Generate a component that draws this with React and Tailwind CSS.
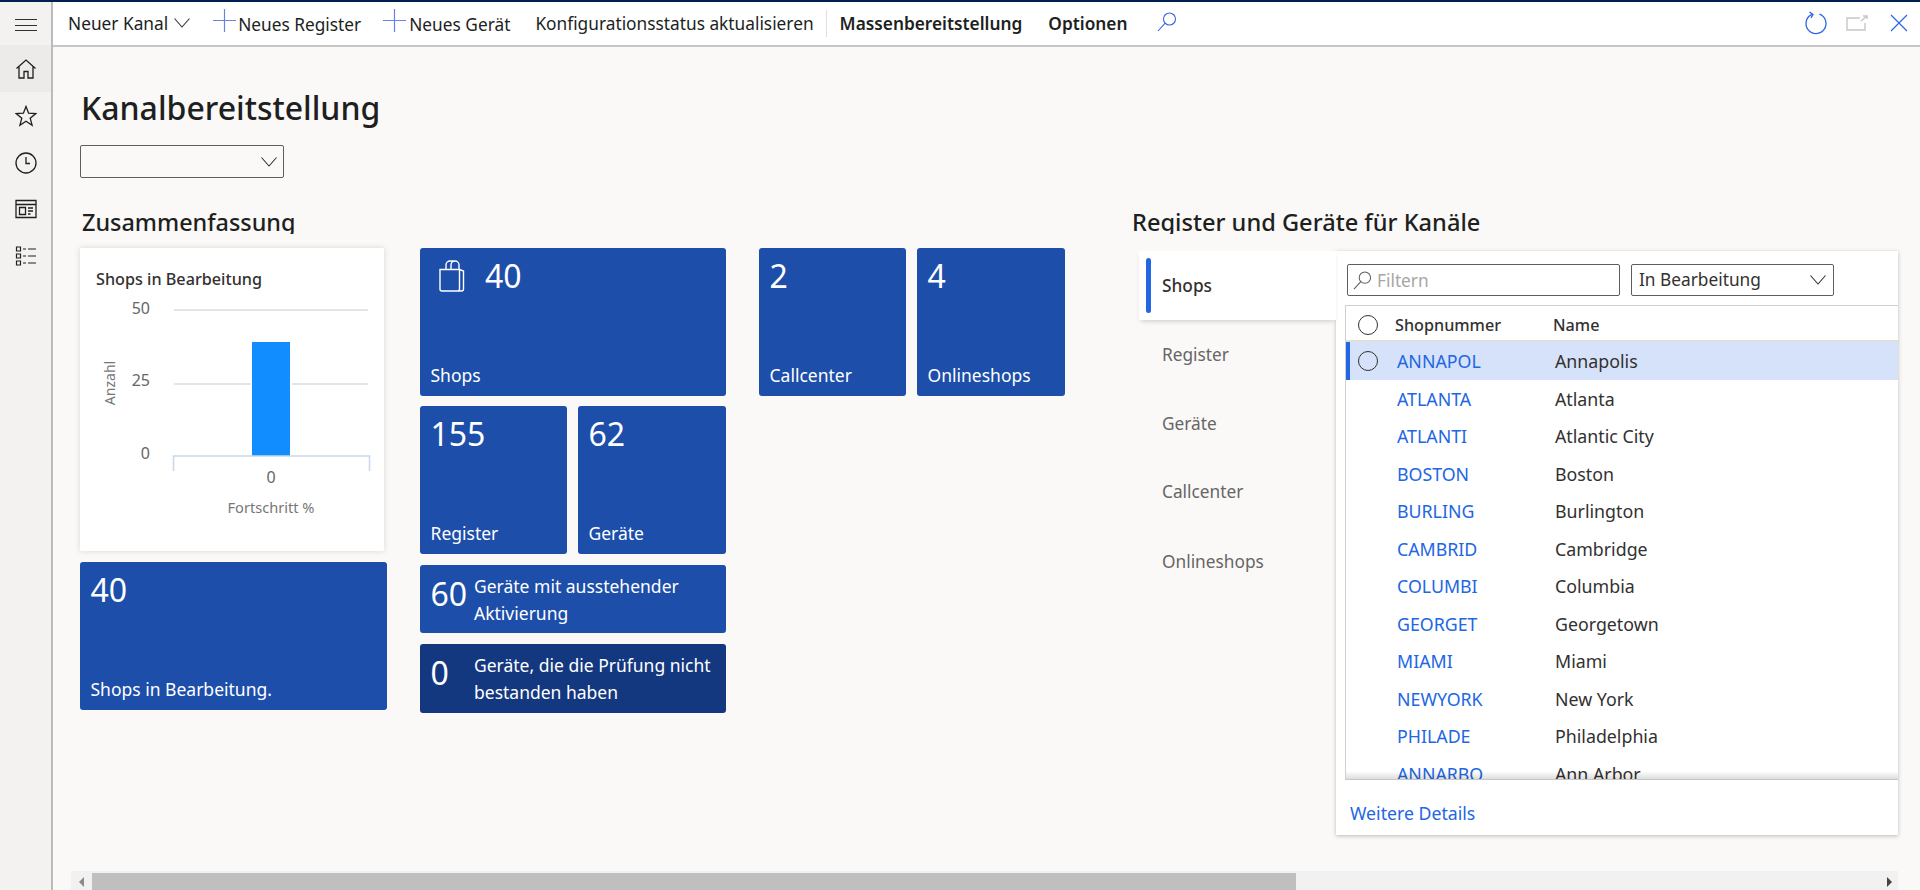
const rows = [
  ["ANNAPOL", "Annapolis"],
  ["ATLANTA", "Atlanta"],
  ["ATLANTI", "Atlantic City"],
  ["BOSTON", "Boston"],
  ["BURLING", "Burlington"],
  ["CAMBRID", "Cambridge"],
  ["COLUMBI", "Columbia"],
  ["GEORGET", "Georgetown"],
  ["MIAMI", "Miami"],
  ["NEWYORK", "New York"],
  ["PHILADE", "Philadelphia"],
  ["ANNARBO", "Ann Arbor"],
];

function Chevron({ className = "" }) {
  return (
    <svg width="16" height="10" viewBox="0 0 16 10" fill="none" stroke="currentColor" strokeWidth="1.1" className={`shrink-0 text-[#323130] ${className}`}>
      <path d="M0.5 0.5L8 9l7.5-8.5" />
    </svg>
  );
}

function Plus() {
  return (
    <svg width="23" height="23" viewBox="0 0 23 23" className="text-[#6a82e0]">
      <path d="M11.5 0v23M0 11.5h23" stroke="currentColor" strokeWidth="1.2" fill="none" />
    </svg>
  );
}

function Magnifier({ className }) {
  return (
    <svg viewBox="0 0 20 20" fill="none" stroke="currentColor" strokeWidth="1.1" className={className}>
      <circle cx="12.5" cy="7" r="6" />
      <path d="M8.2 11.2L1 19" />
    </svg>
  );
}

function Toolbar() {
  return (
    <div className="flex h-[45px] shrink-0 items-center border-b-2 border-[#c8c6c4] bg-white text-[17.3px] text-[#201f1e]">
      <span className="ml-[15px] mt-[1px]">Neuer Kanal</span>
      <Chevron className="ml-[6px] -mt-[1px]" />
      <span className="ml-[23px] -mt-[6px]"><Plus /></span>
      <span className="ml-[2px] mt-[3px]">Neues Register</span>
      <span className="ml-[22px] -mt-[6px]"><Plus /></span>
      <span className="ml-[3px] mt-[3px]">Neues Gerät</span>
      <span className="ml-[25px] mt-[1px]">Konfigurationsstatus aktualisieren</span>
      <span className="ml-[12px] h-[27px] w-[1px] bg-[#e1dfdd]" />
      <span className="ml-[13px] mt-[1px] font-semibold">Massenbereitstellung</span>
      <span className="ml-[26px] mt-[1px] font-semibold">Optionen</span>
      <Magnifier className="ml-[30px] -mt-[4px] h-[20px] w-[20px] text-[#3f63e0]" />
      <div className="ml-auto flex items-center">
        <svg width="24" height="24" viewBox="0 0 24 24" fill="none" className="-mt-[2px] text-[#2b66e3]">
          <path d="M15.5 3.2A10 10 0 1 1 8 3.4" stroke="currentColor" strokeWidth="1.3" />
          <path d="M5.5 1l3.5 2.4-2 3.4" stroke="currentColor" strokeWidth="1.3" />
        </svg>
        <svg width="22" height="16" viewBox="0 0 22 16" fill="none" className="ml-[18px] -mt-[2px] text-[#c8c6c4]">
          <path d="M14 3H1v12h18V8M15 6l6-5M17 1h4v3" stroke="currentColor" strokeWidth="1.4" />
        </svg>
        <svg width="18" height="18" viewBox="0 0 18 18" fill="none" className="ml-[22px] mr-[12px] -mt-[2px] text-[#2b66e3]">
          <path d="M1 1l16 16M17 1L1 17" stroke="currentColor" strokeWidth="1.2" />
        </svg>
      </div>
    </div>
  );
}

function Sidebar() {
  const cls = "h-[22px] w-[22px]";
  return (
    <div className="flex w-[53px] shrink-0 flex-col border-r-2 border-[#bdbbb9] bg-[#f3f2f1] text-[#201f1e]">
      <div className="flex h-[43px] shrink-0 flex-col gap-[4.5px] pl-[15px] pt-[17px]">
        <span className="h-[1px] w-[22px] bg-[#323130]" />
        <span className="h-[1px] w-[22px] bg-[#323130]" />
        <span className="h-[1px] w-[22px] bg-[#323130]" />
      </div>
      <div className="flex h-[47px] items-center justify-center bg-[#edebe9]">
        <svg viewBox="0 0 22 22" fill="none" stroke="currentColor" strokeWidth="1.3" className={cls}>
          <path d="M1.5 10.5L11 2l9.5 8.5M4 8.5V20h5v-6.5h4V20h5V8.5" />
        </svg>
      </div>
      <div className="flex h-[47px] items-center justify-center">
        <svg viewBox="0 0 22 22" fill="none" stroke="currentColor" strokeWidth="1.3" className={cls}>
          <path d="M11 1.5l2.6 6.7 7.2.4-5.6 4.6 1.9 7-6.1-3.9-6.1 3.9 1.9-7-5.6-4.6 7.2-.4z" />
        </svg>
      </div>
      <div className="flex h-[47px] items-center justify-center">
        <svg viewBox="0 0 22 22" fill="none" stroke="currentColor" strokeWidth="1.3" className={cls}>
          <circle cx="11" cy="11" r="10" />
          <path d="M11 5v6.5h4" />
        </svg>
      </div>
      <div className="flex h-[46px] items-center justify-center">
        <svg viewBox="0 0 22 22" fill="none" stroke="currentColor" strokeWidth="1.3" className={cls}>
          <path d="M1 2.5h20v17H1zM1 6.5h20M4.5 9.5h6v7h-6zM13 10h5M13 13h5M13 16h2.5" />
        </svg>
      </div>
      <div className="flex h-[47px] items-center justify-center">
        <svg viewBox="0 0 22 22" fill="none" stroke="currentColor" strokeWidth="1.2" className={cls}>
          <path d="M1.5 2h4v4h-4zM1.5 9h4v4h-4zM1.5 16h4v4h-4zM8 4h3M13 4h8M8 11h3M13 11h8M8 18h3M13 18h8" />
        </svg>
      </div>
    </div>
  );
}

function Tile({ value, label, className = "", icon }) {
  return (
    <div className={`relative flex flex-col justify-between rounded-[3px] bg-[#1c4eaa] px-[10.5px] pb-[9px] pt-[5px] text-white ${className}`}>
      <div className="flex h-[46px] items-center text-[32px] leading-none">
        {icon}
        {value}
      </div>
      <div className="text-[17.5px] leading-[24px]">{label}</div>
    </div>
  );
}

function WideTile({ value, label, className = "" }) {
  return (
    <div className={`flex w-[306px] rounded-[3px] pl-[10.5px] text-white ${className}`}>
      <div className="w-[43.5px] shrink-0 pt-[10px] text-[32px] leading-[38px]">{value}</div>
      <div className="pt-[8px] text-[17.5px] leading-[27px]">{label}</div>
    </div>
  );
}

function BagIcon() {
  return (
    <svg width="28" height="32" viewBox="0 0 28 32" fill="none" stroke="currentColor" strokeWidth="1.4" className="ml-[7.5px] mr-[19px]">
      <path d="M2 9.5h19.5V29a2 2 0 0 1-2 2H4a2 2 0 0 1-2-2zM21.5 9.5l4 1.5v18a2 2 0 0 1-2 2h-4" />
      <path d="M8 9.5V5a4 4 0 0 1 4-4h5a4 4 0 0 1 4 4v4.5M13 9.5V5a4 4 0 0 1 4-4" />
    </svg>
  );
}

function ChartCard() {
  return (
    <div className="relative h-[303px] w-[304px] bg-white shadow-[0_0_6px_rgba(0,0,0,0.14)]">
      <div className="pl-[16px] pt-[19px] text-[16.2px] font-medium leading-[24px] text-[#323130]">Shops in Bearbeitung</div>
      {/* chart is a free drawing inside the card */}
      <svg width="304" height="303" className="absolute left-0 top-0 font-['Noto_Sans']">
        <path d="M94 62h194M94 136h77M212 136h76" stroke="#d9dde3" strokeWidth="1.5" fill="none" />
        <rect x="172" y="94" width="38" height="114" fill="#118dff" />
        <path d="M93.5 223v-15h196v15" stroke="#c7d8e8" strokeWidth="1.5" fill="none" />
        <g fill="#666666" fontSize="16" textAnchor="end">
          <text x="70" y="66">50</text>
          <text x="70" y="138">25</text>
          <text x="70" y="211">0</text>
        </g>
        <text x="191" y="235" fill="#666666" fontSize="16" textAnchor="middle">0</text>
        <text x="191" y="265" fill="#777777" fontSize="14.6" textAnchor="middle">Fortschritt %</text>
        <text x="0" y="0" fill="#777777" fontSize="14" textAnchor="middle" transform="translate(35 135) rotate(-90)">Anzahl</text>
      </svg>
    </div>
  );
}

function Summary() {
  return (
    <div className="w-[1052px] shrink-0">
      <div className="ml-[2px] h-[29px] overflow-hidden text-[23.4px] font-medium leading-[34px] text-[#201f1e]">Zusammenfassung</div>
      <div className="mt-[14px] flex items-start">
        <div className="w-[307px]">
          <ChartCard />
          <Tile value="40" label="Shops in Bearbeitung." className="mt-[11px] h-[148px] w-[307px]" />
        </div>
        <div className="ml-[33px] w-[306px]">
          <Tile icon={<BagIcon />} value="40" label="Shops" className="h-[148px]" />
          <div className="mt-[10px] flex gap-[11px]">
            <Tile value="155" label="Register" className="h-[148px] w-[147px]" />
            <Tile value="62" label="Geräte" className="h-[148px] w-[148px]" />
          </div>
          <WideTile value="60" label={<>Geräte mit ausstehender<br />Aktivierung</>} className="mt-[11px] h-[68px] bg-[#1c4eaa]" />
          <WideTile value="0" label={<>Geräte, die die Prüfung nicht<br />bestanden haben</>} className="mt-[11px] h-[69px] bg-[#14387f]" />
        </div>
        <div className="ml-[33px] flex gap-[11px]">
          <Tile value="2" label="Callcenter" className="h-[148px] w-[147px]" />
          <Tile value="4" label="Onlineshops" className="h-[148px] w-[148px]" />
        </div>
      </div>
    </div>
  );
}

function Radio({ className = "" }) {
  return <span className={`h-[20px] w-[20px] shrink-0 rounded-full border border-[#323130] ${className}`} />;
}

function Grid() {
  return (
    <div className="relative ml-[9px] mt-[9px] h-[475px] overflow-hidden border-b border-l border-t border-[#d2d0ce] border-b-[#c8c6c4]">
      <div className="flex h-[36px] items-center border-b-2 border-[#e1dfdd] pt-[4px] text-[16.2px] font-medium text-[#323130]">
        <Radio className="ml-[12px]" />
        <span className="ml-[17px] w-[158px] pt-[1px]">Shopnummer</span>
        <span className="pt-[1px]">Name</span>
      </div>
      {rows.map(([code, name], i) => (
        <div key={code} className={`relative flex h-[37.5px] items-center text-[17.8px] ${i === 0 ? "bg-[#d6e2f9]" : ""}`}>
          {i === 0 && <span className="absolute bottom-0 left-0 top-0 w-[4px] bg-[#2266e3]" />}
          {i === 0 ? <Radio className="ml-[12px] border-[#605e5c]" /> : <span className="ml-[12px] w-[20px]" />}
          <span className="ml-[19px] w-[158px] pt-[2px] text-[#2266e3]">{code}</span>
          <span className="pt-[2px] text-[#323130]">{name}</span>
        </div>
      ))}
      <div className="absolute bottom-0 left-0 right-0 h-[8px] bg-gradient-to-b from-transparent to-[#00000022]" />
    </div>
  );
}

function Channels() {
  return (
    <div className="w-[766px] shrink-0">
      <div className="h-[29px] overflow-hidden text-[23.6px] font-medium leading-[34px] text-[#201f1e]">Register und Geräte für Kanäle</div>
      <div className="mt-[17px] flex items-start">
        <div className="ml-[7px] w-[197px] shrink-0 text-[17.3px] text-[#666666]">
          <div className="relative flex h-[69px] items-center bg-white pl-[23px] pt-[1px] font-medium text-[#323130] shadow-[0_3px_5px_-2px_rgba(0,0,0,0.2)]">
            <span className="absolute bottom-[7px] left-[7px] top-[7px] w-[5px] rounded-[3px] bg-[#2266e3]" />
            Shops
          </div>
          <div className="flex h-[69px] items-center pl-[23px] pt-[1px]">Register</div>
          <div className="flex h-[68px] items-center pl-[23px] pt-[1px]">Geräte</div>
          <div className="flex h-[69px] items-center pl-[23px] pt-[1px]">Callcenter</div>
          <div className="flex h-[69px] items-center pl-[23px] pt-[2px]">Onlineshops</div>
        </div>
        <div className="h-[584px] flex-1 bg-white shadow-[0_1px_4px_rgba(0,0,0,0.25)]">
          <div className="flex gap-[11px] pl-[11px] pt-[13px]">
            <div className="flex h-[32px] w-[273px] items-center rounded-[2px] border border-[#605e5c] bg-white pl-[5px] text-[17.3px] text-[#a8a6a4]">
              <Magnifier className="h-[19px] w-[19px] text-[#605e5c]" />
              <span className="ml-[5px] pt-[2px]">Filtern</span>
            </div>
            <div className="flex h-[32px] w-[203px] items-center justify-between rounded-[2px] border border-[#605e5c] bg-white pl-[7px] pr-[7px] text-[17.3px] text-[#323130]">
              In Bearbeitung
              <Chevron />
            </div>
          </div>
          <Grid />
          <div className="pl-[14px] pt-[22px] text-[17.7px] leading-[22px] text-[#2266e3]">Weitere Details</div>
        </div>
      </div>
    </div>
  );
}

function HScroll() {
  return (
    <div className="ml-[18px] mr-[22px] flex h-[19px] shrink-0 items-end bg-[#f1f1f1]">
      <div className="flex h-[17px] w-[21px] shrink-0 items-center justify-center">
        <span className="h-0 w-0 border-y-[5px] border-r-[5px] border-y-transparent border-r-[#8a8a8a]" />
      </div>
      <div className="h-[17px] w-[1204px] bg-[#bfbfbf]" />
      <div className="flex h-[17px] flex-1 items-center justify-end pr-[6px]">
        <span className="h-0 w-0 border-y-[5px] border-l-[5px] border-y-transparent border-l-[#444444]" />
      </div>
    </div>
  );
}

export default function App() {
  return (
    <div className="flex h-[890px] w-[1920px] flex-col overflow-hidden bg-[#faf9f8] font-['Noto_Sans',sans-serif]">
      <div className="h-[2px] shrink-0 bg-[#002050]" />
      <div className="flex min-h-0 flex-1">
        <Sidebar />
        <div className="flex min-w-0 flex-1 flex-col">
          <Toolbar />
          <div className="min-h-0 flex-1 pl-[27px]">
            <h1 className="ml-[1px] mt-[38px] h-[46px] text-[32px] font-medium leading-[46px] text-[#201f1e]">Kanalbereitstellung</h1>
            <div className="mt-[14px] flex h-[33px] w-[204px] items-center justify-end rounded-[2px] border border-[#605e5c] pr-[6px]">
              <Chevron />
            </div>
            <div className="mt-[27px] flex">
              <Summary />
              <Channels />
            </div>
          </div>
          <HScroll />
        </div>
      </div>
    </div>
  );
}
